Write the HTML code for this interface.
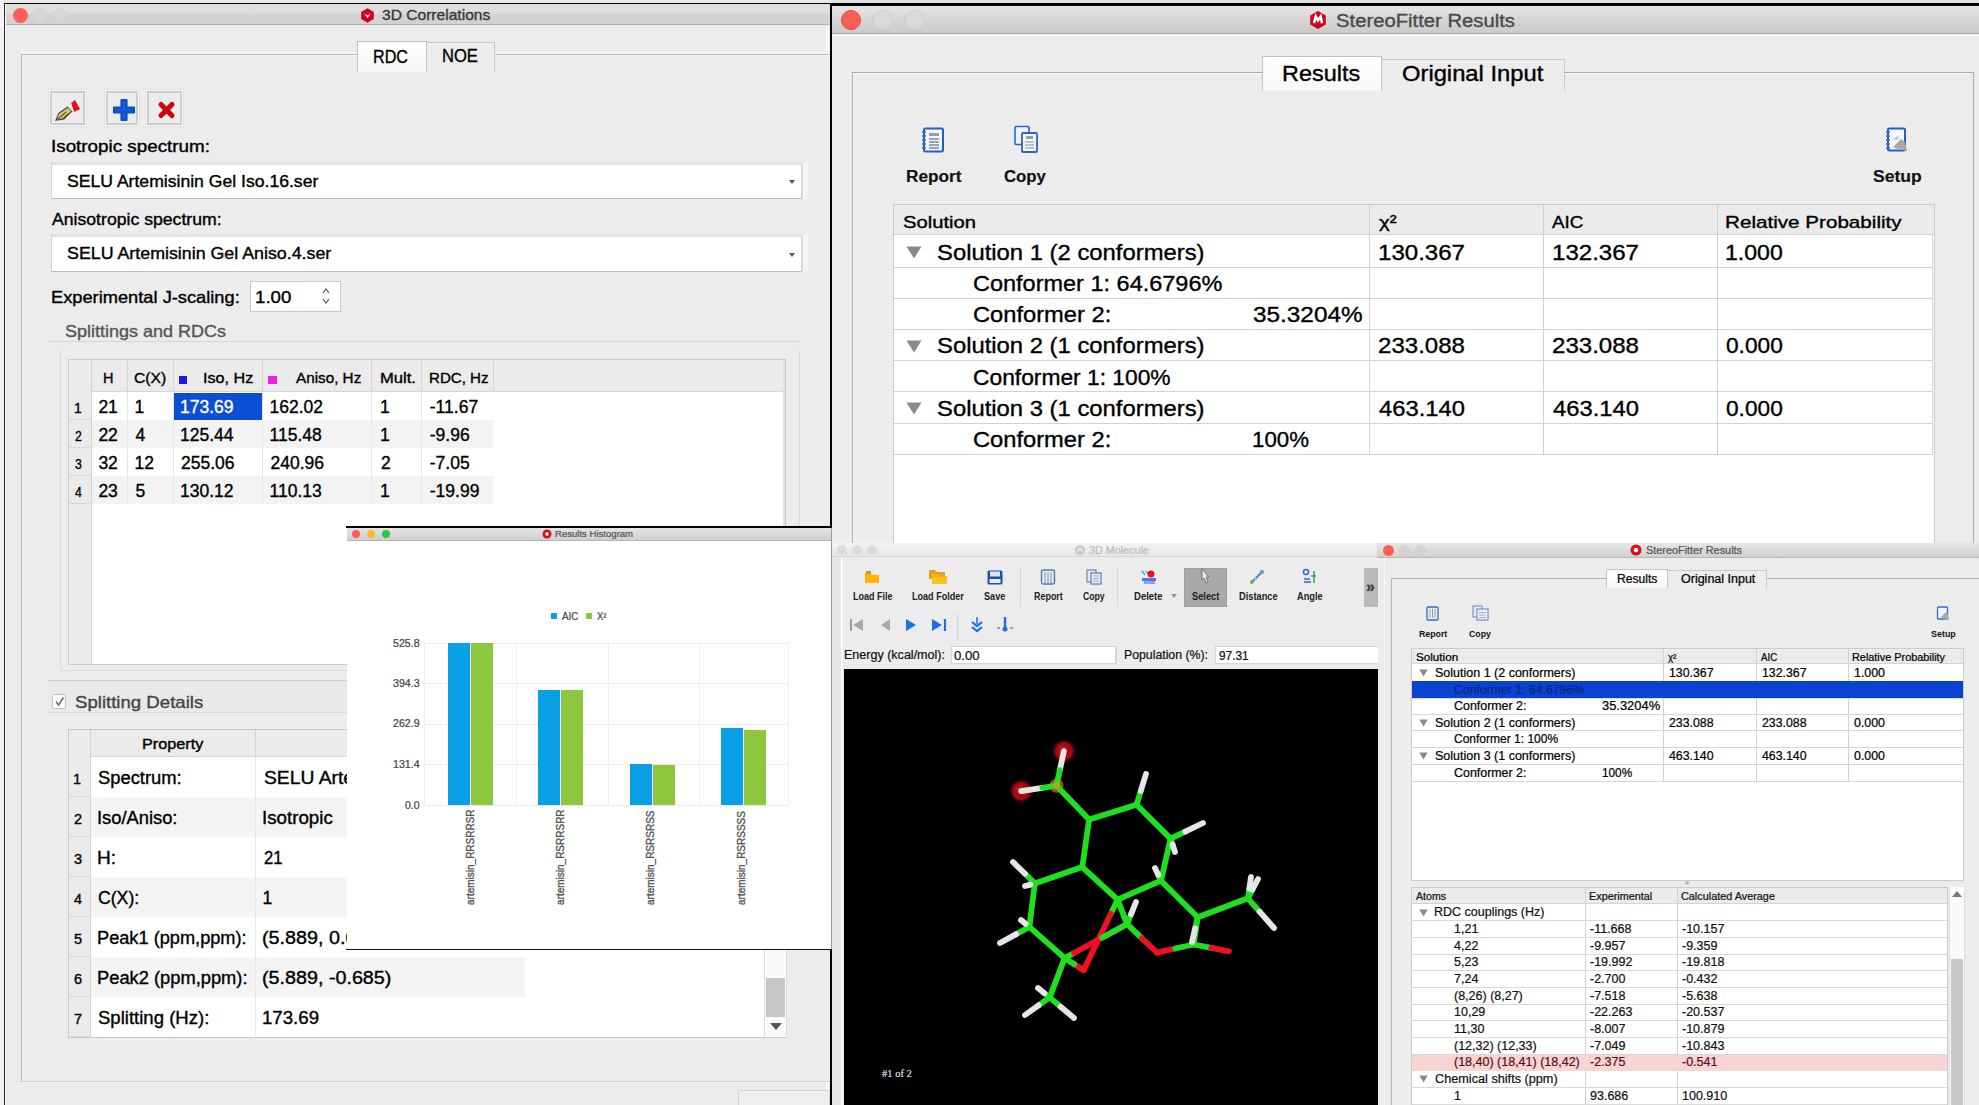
<!DOCTYPE html>
<html><head><meta charset="utf-8"><title>StereoFitter</title>
<style>
html,body{margin:0;padding:0;}
body{width:1979px;height:1105px;position:relative;overflow:hidden;background:#ececec;font-family:'Liberation Sans',sans-serif;}
div,span,svg{position:absolute;box-sizing:border-box;}
.t{white-space:pre;line-height:normal;transform-origin:0 0;font-family:'Liberation Sans',sans-serif;-webkit-text-stroke:0.35px currentColor;}

</style></head><body>
<div style="left:0px;top:0px;width:832px;height:3px;background:#e9e9e9;"></div>
<div style="left:0px;top:0px;width:4px;height:1105px;background:#f2f2f2;"></div>
<div style="left:4px;top:3px;width:828px;height:1102px;background:#ececec;"></div>
<div style="left:4px;top:3px;width:827px;height:1px;background:#000;"></div>
<div style="left:4px;top:3px;width:1px;height:1102px;background:#2a2a2a;"></div>
<div style="left:5px;top:4px;width:1px;height:1101px;background:#fafafa;"></div>
<div style="left:830px;top:3px;width:2px;height:1102px;background:#000;"></div>
<div style="left:826px;top:25px;width:3px;height:1080px;background:#f7f7f7;"></div>
<div style="left:6px;top:4px;width:824px;height:21px;background:linear-gradient(#e0e0e0 0%,#dcdcdc 50%,#d2d2d2 51%,#d2d2d2 100%);border-bottom:1px solid #b2b2b2;"></div>
<div style="left:12.5px;top:7.5px;width:15px;height:15px;background:#fc5f57;border-radius:50%;"></div>
<div style="left:33px;top:8px;width:14px;height:14px;background:#d6d6d6;border-radius:50%;"></div>
<div style="left:53px;top:8px;width:14px;height:14px;background:#d6d6d6;border-radius:50%;"></div>
<svg style="left:360px;top:8px" width="15" height="15" viewBox="0 0 15 15"><polygon points="7.5,0.3 13.8,3.9 13.8,11.1 7.5,14.7 1.2,11.1 1.2,3.9" fill="#d0021b"/><path d="M4.2,5.2 L7.5,10.2 L10.8,5.2 L7.5,7.5 Z" fill="#fff"/></svg>
<span class="t" style="left:382.00px;top:7.38px;font-size:14.5px;color:#3a3a3a;transform:scaleX(1.0748);">3D Correlations</span>
<div style="left:21px;top:52px;width:809px;height:2px;background:#f7f7f7;"></div>
<div style="left:21px;top:54px;width:809px;height:1028px;border:1px solid #b3b3b3;border-right:none;background:#ececec;box-shadow:inset 1px 1px 0 #f8f8f8;"></div>
<div style="left:357px;top:41px;width:70px;height:31px;background:linear-gradient(#ffffff,#f6f6f6);border:1px solid #c2c2c2;border-bottom:none;"></div>
<div style="left:427px;top:42px;width:68px;height:30px;background:#ececec;border:1px solid #c8c8c8;border-bottom:none;border-left:none;"></div>
<span class="t" style="left:373.11px;top:46.71px;font-size:18px;color:#000;transform:scaleX(0.8948);">RDC</span>
<span class="t" style="left:442.08px;top:46.21px;font-size:18px;color:#000;transform:scaleX(0.9211);">NOE</span>
<div style="left:48px;top:89px;width:39px;height:38px;background:#ececec;border:1px solid #e2e2e2;box-shadow:inset 0 0 0 1px #f6f6f6, inset 0 0 0 3px #cdcdcd;"></div>
<div style="left:104px;top:89px;width:36px;height:38px;background:#ececec;border:1px solid #e2e2e2;box-shadow:inset 0 0 0 1px #f6f6f6, inset 0 0 0 3px #cdcdcd;"></div>
<div style="left:145px;top:89px;width:39px;height:38px;background:#ececec;border:1px solid #e2e2e2;box-shadow:inset 0 0 0 1px #f6f6f6, inset 0 0 0 3px #cdcdcd;"></div>
<svg style="left:55px;top:99px" width="26" height="22" viewBox="0 0 26 22"><path d="M1,21 L4,14 L13,8 L17,12 L9,20 Z" fill="#d8c77a" stroke="#3e3e28" stroke-width="1.1"/><path d="M3,20 L11,13 M6,21 L13,15" stroke="#6a6030" stroke-width="1.3"/><path d="M16,4 L20,1 L25,10 L19,13 Z" fill="#e8101a"/><path d="M13,8 L16,4 L19,13 L17,12 Z" fill="#f2f2f2"/></svg>
<svg style="left:113px;top:99px" width="22" height="22" viewBox="0 0 22 22"><path d="M11,2 V20 M2,11 H20" stroke="#0b50cf" stroke-width="7.2" stroke-linecap="round"/><path d="M11,4 V18 M4,11 H18" stroke="#1a6ae6" stroke-width="2.5" stroke-linecap="round" opacity="0.6"/></svg>
<svg style="left:156px;top:100px" width="21" height="20" viewBox="0 0 21 20"><path d="M5,4.5 L16,15.5 M16,4.5 L5,15.5" stroke="#d0000c" stroke-width="5" stroke-linecap="round"/></svg>
<span class="t" style="left:50.82px;top:138.22px;font-size:16px;color:#000;transform:scaleX(1.1755);">Isotropic spectrum:</span>
<div style="left:51px;top:162px;width:751px;height:37px;background:#fff;border:1px solid #d4d4d4;border-top:3px solid #e3e3e3;border-bottom-color:#bdbdbd;"></div>
<div style="left:802px;top:162px;width:6px;height:37px;background:#f4f4f4;border-left:1px solid #dedede;"></div>
<span class="t" style="left:66.50px;top:172.52px;font-size:16px;color:#000;transform:scaleX(1.0996);">SELU Artemisinin Gel Iso.16.ser</span>
<svg style="left:788px;top:179px" width="8" height="6" viewBox="0 0 8 6"><path d="M1,1 L7,1 L4,5 Z" fill="#555"/></svg>
<span class="t" style="left:52.00px;top:211.02px;font-size:16px;color:#000;transform:scaleX(1.1024);">Anisotropic spectrum:</span>
<div style="left:51px;top:234px;width:751px;height:38px;background:#fff;border:1px solid #d4d4d4;border-top:3px solid #e3e3e3;border-bottom-color:#bdbdbd;"></div>
<div style="left:802px;top:234px;width:6px;height:38px;background:#f4f4f4;border-left:1px solid #dedede;"></div>
<span class="t" style="left:66.50px;top:245.02px;font-size:16px;color:#000;transform:scaleX(1.1131);">SELU Artemisinin Gel Aniso.4.ser</span>
<svg style="left:788px;top:252px" width="8" height="6" viewBox="0 0 8 6"><path d="M1,1 L7,1 L4,5 Z" fill="#555"/></svg>
<span class="t" style="left:50.89px;top:288.07px;font-size:16.5px;color:#000;transform:scaleX(1.1066);">Experimental J-scaling:</span>
<div style="left:250px;top:281px;width:91px;height:31px;background:#fff;border:1px solid #c9c9c9;"></div>
<span class="t" style="left:254.87px;top:288.07px;font-size:16.5px;color:#000;transform:scaleX(1.1313);">1.00</span>
<svg style="left:321px;top:286px" width="10" height="20" viewBox="0 0 10 20"><path d="M2,7 L5,3 L8,7" fill="none" stroke="#555" stroke-width="1.2"/><path d="M2,13 L5,17 L8,13" fill="none" stroke="#555" stroke-width="1.2"/></svg>
<span class="t" style="left:65.00px;top:322.52px;font-size:16px;color:#555;transform:scaleX(1.1245);">Splittings and RDCs</span>
<div style="left:48px;top:341px;width:752px;height:1px;background:#d4d4d4;"></div>
<div style="left:60px;top:351px;width:740px;height:320px;border:1px solid #dadada;border-top:none;"></div>
<div style="left:68px;top:359px;width:718px;height:306px;background:#fff;border:1px solid #c9c9c9;"></div>
<div style="left:69px;top:360px;width:716px;height:32px;background:#ebebeb;border-bottom:1px solid #d6d6d6;"></div>
<div style="left:69px;top:360px;width:23px;height:304px;background:#ebebeb;border-right:1px solid #d3d3d3;"></div>
<div style="left:783px;top:360px;width:2px;height:304px;background:#e2e2e2;"></div>
<div style="left:127px;top:360px;width:1px;height:32px;background:#d4d4d4;"></div>
<div style="left:173px;top:360px;width:1px;height:32px;background:#d4d4d4;"></div>
<div style="left:262px;top:360px;width:1px;height:32px;background:#d4d4d4;"></div>
<div style="left:371px;top:360px;width:1px;height:32px;background:#d4d4d4;"></div>
<div style="left:421px;top:360px;width:1px;height:32px;background:#d4d4d4;"></div>
<div style="left:493px;top:360px;width:1px;height:32px;background:#d4d4d4;"></div>
<div style="left:92px;top:392px;width:401px;height:28px;background:#ffffff;"></div>
<div style="left:127px;top:392px;width:1px;height:28px;background:#e6e6e6;"></div>
<div style="left:173px;top:392px;width:1px;height:28px;background:#e6e6e6;"></div>
<div style="left:262px;top:392px;width:1px;height:28px;background:#e6e6e6;"></div>
<div style="left:371px;top:392px;width:1px;height:28px;background:#e6e6e6;"></div>
<div style="left:421px;top:392px;width:1px;height:28px;background:#e6e6e6;"></div>
<div style="left:69px;top:419px;width:23px;height:1px;background:#d9d9d9;"></div>
<span class="t" style="left:74.00px;top:400.33px;font-size:14px;color:#000;">1</span>
<div style="left:92px;top:420px;width:401px;height:28px;background:#f3f3f3;"></div>
<div style="left:127px;top:420px;width:1px;height:28px;background:#e6e6e6;"></div>
<div style="left:173px;top:420px;width:1px;height:28px;background:#e6e6e6;"></div>
<div style="left:262px;top:420px;width:1px;height:28px;background:#e6e6e6;"></div>
<div style="left:371px;top:420px;width:1px;height:28px;background:#e6e6e6;"></div>
<div style="left:421px;top:420px;width:1px;height:28px;background:#e6e6e6;"></div>
<div style="left:69px;top:447px;width:23px;height:1px;background:#d9d9d9;"></div>
<span class="t" style="left:75.00px;top:428.33px;font-size:14px;color:#000;transform:scaleX(0.8750);">2</span>
<div style="left:92px;top:448px;width:401px;height:28px;background:#ffffff;"></div>
<div style="left:127px;top:448px;width:1px;height:28px;background:#e6e6e6;"></div>
<div style="left:173px;top:448px;width:1px;height:28px;background:#e6e6e6;"></div>
<div style="left:262px;top:448px;width:1px;height:28px;background:#e6e6e6;"></div>
<div style="left:371px;top:448px;width:1px;height:28px;background:#e6e6e6;"></div>
<div style="left:421px;top:448px;width:1px;height:28px;background:#e6e6e6;"></div>
<div style="left:69px;top:475px;width:23px;height:1px;background:#d9d9d9;"></div>
<span class="t" style="left:75.00px;top:456.33px;font-size:14px;color:#000;transform:scaleX(0.8750);">3</span>
<div style="left:92px;top:476px;width:401px;height:28px;background:#f3f3f3;"></div>
<div style="left:127px;top:476px;width:1px;height:28px;background:#e6e6e6;"></div>
<div style="left:173px;top:476px;width:1px;height:28px;background:#e6e6e6;"></div>
<div style="left:262px;top:476px;width:1px;height:28px;background:#e6e6e6;"></div>
<div style="left:371px;top:476px;width:1px;height:28px;background:#e6e6e6;"></div>
<div style="left:421px;top:476px;width:1px;height:28px;background:#e6e6e6;"></div>
<div style="left:69px;top:503px;width:23px;height:1px;background:#d9d9d9;"></div>
<span class="t" style="left:75.00px;top:484.33px;font-size:14px;color:#000;transform:scaleX(0.8750);">4</span>
<div style="left:173.5px;top:392.5px;width:88.5px;height:27px;background:#0b4fd4;"></div>
<span class="t" style="left:98.40px;top:396.66px;font-size:17.5px;color:#000;">21</span>
<span class="t" style="left:134.60px;top:396.66px;font-size:17.5px;color:#000;">1</span>
<span class="t" style="left:180.00px;top:396.66px;font-size:17.5px;color:#fff;">173.69</span>
<span class="t" style="left:269.50px;top:396.66px;font-size:17.5px;color:#000;">162.02</span>
<span class="t" style="left:380.00px;top:396.66px;font-size:17.5px;color:#000;">1</span>
<span class="t" style="left:429.80px;top:396.66px;font-size:17.5px;color:#000;">-11.67</span>
<span class="t" style="left:98.40px;top:424.66px;font-size:17.5px;color:#000;">22</span>
<span class="t" style="left:135.60px;top:424.66px;font-size:17.5px;color:#000;">4</span>
<span class="t" style="left:180.00px;top:424.66px;font-size:17.5px;color:#000;">125.44</span>
<span class="t" style="left:269.50px;top:424.66px;font-size:17.5px;color:#000;">115.48</span>
<span class="t" style="left:380.00px;top:424.66px;font-size:17.5px;color:#000;">1</span>
<span class="t" style="left:429.80px;top:424.66px;font-size:17.5px;color:#000;">-9.96</span>
<span class="t" style="left:98.40px;top:452.66px;font-size:17.5px;color:#000;">32</span>
<span class="t" style="left:134.60px;top:452.66px;font-size:17.5px;color:#000;">12</span>
<span class="t" style="left:181.00px;top:452.66px;font-size:17.5px;color:#000;">255.06</span>
<span class="t" style="left:270.50px;top:452.66px;font-size:17.5px;color:#000;">240.96</span>
<span class="t" style="left:381.00px;top:452.66px;font-size:17.5px;color:#000;">2</span>
<span class="t" style="left:429.80px;top:452.66px;font-size:17.5px;color:#000;">-7.05</span>
<span class="t" style="left:98.40px;top:480.66px;font-size:17.5px;color:#000;">23</span>
<span class="t" style="left:135.60px;top:480.66px;font-size:17.5px;color:#000;">5</span>
<span class="t" style="left:180.00px;top:480.66px;font-size:17.5px;color:#000;">130.12</span>
<span class="t" style="left:269.50px;top:480.66px;font-size:17.5px;color:#000;">110.13</span>
<span class="t" style="left:380.00px;top:480.66px;font-size:17.5px;color:#000;">1</span>
<span class="t" style="left:429.80px;top:480.66px;font-size:17.5px;color:#000;">-19.99</span>
<span class="t" style="left:103.00px;top:369.88px;font-size:14.5px;color:#000;">H</span>
<span class="t" style="left:134.40px;top:369.88px;font-size:14.5px;color:#000;transform:scaleX(1.0838);">C(X)</span>
<div style="left:178.6px;top:376px;width:8.4px;height:7.5px;background:#1a1ae6;"></div>
<span class="t" style="left:202.88px;top:369.88px;font-size:14.5px;color:#000;transform:scaleX(1.1169);">Iso, Hz</span>
<div style="left:268px;top:376px;width:8.5px;height:7.5px;background:#f020e8;"></div>
<span class="t" style="left:296.00px;top:369.88px;font-size:14.5px;color:#000;transform:scaleX(1.0518);">Aniso, Hz</span>
<span class="t" style="left:379.86px;top:369.88px;font-size:14.5px;color:#000;transform:scaleX(1.1431);">Mult.</span>
<span class="t" style="left:428.76px;top:369.88px;font-size:14.5px;color:#000;transform:scaleX(1.0403);">RDC, Hz</span>
<div style="left:48px;top:680px;width:752px;height:1px;background:#d0d0d0;"></div>
<div style="left:48px;top:681px;width:752px;height:32px;background:#e9e9e9;"></div>
<div style="left:48px;top:712px;width:752px;height:1px;background:#d8d8d8;"></div>
<div style="left:52px;top:694px;width:14px;height:15px;background:#fbfbfb;border:1px solid #c4c4c4;border-radius:2px;"></div>
<svg style="left:54px;top:696px" width="11" height="11" viewBox="0 0 11 11"><path d="M2,5.5 L4.5,9 L9.5,1.5" fill="none" stroke="#666" stroke-width="1.4"/></svg>
<span class="t" style="left:75.30px;top:692.62px;font-size:17px;color:#444;transform:scaleX(1.0946);">Splitting Details</span>
<div style="left:68px;top:729px;width:719px;height:309px;background:#fff;border:1px solid #c9c9c9;"></div>
<div style="left:69px;top:730px;width:717px;height:27px;background:#ebebeb;border-bottom:1px solid #d6d6d6;"></div>
<div style="left:69px;top:730px;width:22px;height:307px;background:#ebebeb;border-right:1px solid #d3d3d3;"></div>
<div style="left:255px;top:730px;width:1px;height:27px;background:#d4d4d4;"></div>
<div style="left:524px;top:730px;width:1px;height:27px;background:#d4d4d4;"></div>
<span class="t" style="left:141.88px;top:736.38px;font-size:14.5px;color:#000;transform:scaleX(1.1182);">Property</span>
<div style="left:91px;top:757px;width:434px;height:40px;background:#ffffff;"></div>
<div style="left:255px;top:757px;width:1px;height:40px;background:#e8e8e8;"></div>
<div style="left:69px;top:796px;width:22px;height:1px;background:#dadada;"></div>
<span class="t" style="left:73.00px;top:770.88px;font-size:14.5px;color:#000;">1</span>
<span class="t" style="left:97.60px;top:767.66px;font-size:17.5px;color:#000;transform:scaleX(1.0496);">Spectrum:</span>
<span class="t" style="left:263.50px;top:767.66px;font-size:17.5px;color:#000;transform:scaleX(1.1020);">SELU Artemisinin Gel Iso.16.ser</span>
<div style="left:91px;top:797px;width:434px;height:40px;background:#f4f4f4;"></div>
<div style="left:255px;top:797px;width:1px;height:40px;background:#e8e8e8;"></div>
<div style="left:69px;top:836px;width:22px;height:1px;background:#dadada;"></div>
<span class="t" style="left:74.00px;top:810.88px;font-size:14.5px;color:#000;">2</span>
<span class="t" style="left:96.55px;top:807.66px;font-size:17.5px;color:#000;transform:scaleX(1.0469);">Iso/Aniso:</span>
<span class="t" style="left:262.43px;top:807.66px;font-size:17.5px;color:#000;transform:scaleX(1.0705);">Isotropic</span>
<div style="left:91px;top:837px;width:434px;height:40px;background:#ffffff;"></div>
<div style="left:255px;top:837px;width:1px;height:40px;background:#e8e8e8;"></div>
<div style="left:69px;top:876px;width:22px;height:1px;background:#dadada;"></div>
<span class="t" style="left:74.00px;top:850.88px;font-size:14.5px;color:#000;">3</span>
<span class="t" style="left:96.51px;top:847.66px;font-size:17.5px;color:#000;transform:scaleX(1.0871);">H:</span>
<span class="t" style="left:263.50px;top:847.66px;font-size:17.5px;color:#000;transform:scaleX(0.9502);">21</span>
<div style="left:91px;top:877px;width:434px;height:40px;background:#f4f4f4;"></div>
<div style="left:255px;top:877px;width:1px;height:40px;background:#e8e8e8;"></div>
<div style="left:69px;top:916px;width:22px;height:1px;background:#dadada;"></div>
<span class="t" style="left:74.00px;top:890.88px;font-size:14.5px;color:#000;">4</span>
<span class="t" style="left:97.60px;top:887.66px;font-size:17.5px;color:#000;transform:scaleX(1.0084);">C(X):</span>
<span class="t" style="left:262.50px;top:887.66px;font-size:17.5px;color:#000;">1</span>
<div style="left:91px;top:917px;width:434px;height:40px;background:#ffffff;"></div>
<div style="left:255px;top:917px;width:1px;height:40px;background:#e8e8e8;"></div>
<div style="left:69px;top:956px;width:22px;height:1px;background:#dadada;"></div>
<span class="t" style="left:74.00px;top:930.88px;font-size:14.5px;color:#000;">5</span>
<span class="t" style="left:96.56px;top:927.66px;font-size:17.5px;color:#000;transform:scaleX(1.0395);">Peak1 (ppm,ppm):</span>
<span class="t" style="left:262.37px;top:927.66px;font-size:17.5px;color:#000;transform:scaleX(1.1294);">(5.889, 0.000)</span>
<div style="left:91px;top:957px;width:434px;height:40px;background:#f4f4f4;"></div>
<div style="left:255px;top:957px;width:1px;height:40px;background:#e8e8e8;"></div>
<div style="left:69px;top:996px;width:22px;height:1px;background:#dadada;"></div>
<span class="t" style="left:74.00px;top:970.88px;font-size:14.5px;color:#000;">6</span>
<span class="t" style="left:96.55px;top:967.66px;font-size:17.5px;color:#000;transform:scaleX(1.0458);">Peak2 (ppm,ppm):</span>
<span class="t" style="left:262.37px;top:967.66px;font-size:17.5px;color:#000;transform:scaleX(1.1269);">(5.889, -0.685)</span>
<div style="left:91px;top:997px;width:434px;height:40px;background:#ffffff;"></div>
<div style="left:255px;top:997px;width:1px;height:40px;background:#e8e8e8;"></div>
<div style="left:69px;top:1036px;width:22px;height:1px;background:#dadada;"></div>
<span class="t" style="left:74.00px;top:1010.88px;font-size:14.5px;color:#000;">7</span>
<span class="t" style="left:97.60px;top:1007.66px;font-size:17.5px;color:#000;transform:scaleX(1.0599);">Splitting (Hz):</span>
<span class="t" style="left:262.43px;top:1007.66px;font-size:17.5px;color:#000;transform:scaleX(1.0658);">173.69</span>
<div style="left:764px;top:950px;width:23px;height:87px;background:#fafafa;border-left:1px solid #dcdcdc;border-right:1px solid #dcdcdc;"></div>
<div style="left:766px;top:978px;width:19px;height:39px;background:#c6c6c6;"></div>
<svg style="left:769px;top:1021px" width="14" height="10" viewBox="0 0 14 10"><path d="M1,2 L13,2 L7,9 Z" fill="#555"/></svg>
<div style="left:20px;top:1081px;width:810px;height:1px;background:#cfcfcf;"></div>
<div style="left:738px;top:1090px;width:92px;height:15px;background:#f0f0f0;border:1px solid #d4d4d4;border-bottom:none;"></div>
<div style="left:832px;top:0px;width:1147px;height:3px;background:#e0e0e0;"></div>
<div style="left:832px;top:3px;width:1147px;height:543px;background:#ececec;"></div>
<div style="left:830px;top:3px;width:1149px;height:3.3px;background:#000;"></div>
<div style="left:832px;top:6.3px;width:1147px;height:27.7px;background:linear-gradient(#e4e4e4 0%,#dcdcdc 30%,#d3d3d3 60%,#cbcbcb 100%);border-bottom:1px solid #a8a8a8;"></div>
<div style="left:832px;top:35px;width:1147px;height:1px;background:#f8f8f8;"></div>
<div style="left:841px;top:10px;width:20px;height:20px;background:#fd5f57;border-radius:50%;border:1px solid #e2463f;"></div>
<div style="left:873px;top:10px;width:20px;height:20px;background:#d9d9d9;border-radius:50%;border:1px solid #cfcfcf;"></div>
<div style="left:905px;top:10px;width:20px;height:20px;background:#d9d9d9;border-radius:50%;border:1px solid #cfcfcf;"></div>
<svg style="left:1309px;top:11px" width="18" height="18" viewBox="0 0 18 18"><polygon points="9.00,0.00 16.79,4.50 16.79,13.50 9.00,18.00 1.21,13.50 1.21,4.50" fill="#d0021b"/><path d="M4.95,12.15 L6.75,5.3999999999999995 L9,9.450000000000001 L11.700000000000001,5.3999999999999995 L13.049999999999999,12.15" fill="none" stroke="#fff" stroke-width="2.5200000000000005"/></svg>
<span class="t" style="left:1336.40px;top:11.01px;font-size:18px;color:#4a4a4a;transform:scaleX(1.1254);">StereoFitter Results</span>
<div style="left:852px;top:72px;width:1122px;height:476px;border:1px solid #ababab;background:#ececec;box-shadow:inset 1px 1px 0 #f8f8f8;"></div>
<div style="left:1262px;top:56px;width:120px;height:35px;background:linear-gradient(#fff,#f7f7f7);border:1px solid #c3c3c3;border-bottom:none;"></div>
<div style="left:1382px;top:59px;width:183px;height:32px;background:#ececec;border:1px solid #c8c8c8;border-left:none;border-bottom:none;"></div>
<span class="t" style="left:1281.61px;top:62.34px;font-size:21.5px;color:#000;transform:scaleX(1.0909);">Results</span>
<span class="t" style="left:1401.70px;top:62.34px;font-size:21.5px;color:#000;transform:scaleX(1.1048);">Original Input</span>
<svg style="left:920px;top:127px" width="25.0" height="26.0" viewBox="0 0 25 26"><rect x="4" y="1.5" width="19" height="23" rx="1.5" fill="#f4f7fb" stroke="#1f5fc8" stroke-width="2"/><path d="M2,5 h4 M2,9 h4 M2,13 h4 M2,17 h4 M2,21 h4" stroke="#3a6fd0" stroke-width="1.4"/><rect x="9" y="6" width="10" height="3" fill="#8aa2c8"/><path d="M9,12 h10 M9,15 h10 M9,18 h10 M9,21 h10" stroke="#7a8aa6" stroke-width="1.3"/></svg>
<span class="t" style="left:906.43px;top:167.92px;font-size:16px;color:#111;font-weight:700;-webkit-text-stroke-width:0.15px;transform:scaleX(1.0737);">Report</span>
<svg style="left:1012px;top:125px" width="28.0" height="28.0" viewBox="0 0 28 28"><rect x="3" y="1.5" width="14" height="18" rx="1" fill="#eef2f8" stroke="#2d64c4" stroke-width="1.6"/><rect x="10" y="8" width="15" height="19" rx="1" fill="#f6f8fb" stroke="#2d64c4" stroke-width="1.8"/><rect x="14" y="11" width="7" height="3" fill="#8da0c0"/><path d="M13,17 h9 M13,20 h9 M13,23 h9" stroke="#7d8aa4" stroke-width="1.2"/></svg>
<span class="t" style="left:1004.00px;top:167.92px;font-size:16px;color:#111;font-weight:700;-webkit-text-stroke-width:0.15px;transform:scaleX(1.0473);">Copy</span>
<svg style="left:1884px;top:127px" width="25.0" height="26.0" viewBox="0 0 25 26"><rect x="4" y="1.5" width="17" height="22" rx="1.5" fill="#f4f6fa" stroke="#1f5fc8" stroke-width="2"/><path d="M2,5 h4 M2,9 h4 M2,13 h4 M2,17 h4 M2,21 h4" stroke="#3a6fd0" stroke-width="1.3"/><path d="M9,20 L17,12 L21,15 L23,24 L14,22 Z" fill="#a8a8a8"/><path d="M9,13 L13,9 L15,12 Z" fill="#bdbdbd"/></svg>
<span class="t" style="left:1872.70px;top:167.52px;font-size:16px;color:#111;font-weight:700;-webkit-text-stroke-width:0.15px;transform:scaleX(1.0969);">Setup</span>
<div style="left:893px;top:204px;width:1042px;height:340px;background:#fff;border:1px solid #c9c9c9;border-bottom:none;"></div>
<div style="left:894px;top:205px;width:1040px;height:30px;background:#ebebeb;border-bottom:1px solid #d2d2d2;"></div>
<div style="left:1369px;top:205px;width:1px;height:250px;background:#d0d0d0;"></div>
<div style="left:1543px;top:205px;width:1px;height:250px;background:#d0d0d0;"></div>
<div style="left:1717px;top:205px;width:1px;height:250px;background:#d0d0d0;"></div>
<div style="left:1932px;top:235px;width:1px;height:220px;background:#d6d6d6;"></div>
<span class="t" style="left:902.50px;top:213.12px;font-size:17px;color:#000;transform:scaleX(1.1889);">Solution</span>
<span class="t" style="left:1379.00px;top:213.12px;font-size:17px;color:#000;transform:scaleX(1.2062);">χ²</span>
<span class="t" style="left:1551.50px;top:213.12px;font-size:17px;color:#000;transform:scaleX(1.1047);">AIC</span>
<span class="t" style="left:1724.59px;top:213.12px;font-size:17px;color:#000;transform:scaleX(1.2137);">Relative Probability</span>
<div style="left:894px;top:267px;width:1039px;height:1px;background:#d3d3d3;"></div>
<div style="left:894px;top:298px;width:1039px;height:1px;background:#d3d3d3;"></div>
<div style="left:894px;top:329px;width:1039px;height:1px;background:#d3d3d3;"></div>
<div style="left:894px;top:360px;width:1039px;height:1px;background:#d3d3d3;"></div>
<div style="left:894px;top:391px;width:1039px;height:1px;background:#d3d3d3;"></div>
<div style="left:894px;top:423px;width:1039px;height:1px;background:#d3d3d3;"></div>
<div style="left:894px;top:454px;width:1039px;height:1px;background:#d3d3d3;"></div>
<svg style="left:906px;top:246.0px" width="16" height="13" viewBox="0 0 16 13"><path d="M0.5,0.5 L15.5,0.5 L8,12.5 Z" fill="#8a8a8a"/></svg>
<span class="t" style="left:937.42px;top:239.79px;font-size:22px;color:#000;transform:scaleX(1.0831);">Solution 1 (2 conformers)</span>
<span class="t" style="left:1377.61px;top:239.79px;font-size:22px;color:#000;transform:scaleX(1.0934);">130.367</span>
<span class="t" style="left:1551.91px;top:239.79px;font-size:22px;color:#000;transform:scaleX(1.0934);">132.367</span>
<span class="t" style="left:1724.75px;top:239.79px;font-size:22px;color:#000;transform:scaleX(1.0498);">1.000</span>
<span class="t" style="left:972.93px;top:270.99px;font-size:22px;color:#000;transform:scaleX(1.0676);">Conformer 1: 64.6796%</span>
<span class="t" style="left:972.92px;top:302.19px;font-size:22px;color:#000;transform:scaleX(1.0771);">Conformer 2:</span>
<svg style="left:906px;top:339.6px" width="16" height="13" viewBox="0 0 16 13"><path d="M0.5,0.5 L15.5,0.5 L8,12.5 Z" fill="#8a8a8a"/></svg>
<span class="t" style="left:937.42px;top:333.39px;font-size:22px;color:#000;transform:scaleX(1.0831);">Solution 2 (1 conformers)</span>
<span class="t" style="left:1377.61px;top:333.39px;font-size:22px;color:#000;transform:scaleX(1.0934);">233.088</span>
<span class="t" style="left:1551.91px;top:333.39px;font-size:22px;color:#000;transform:scaleX(1.0934);">233.088</span>
<span class="t" style="left:1725.80px;top:333.39px;font-size:22px;color:#000;transform:scaleX(1.0307);">0.000</span>
<span class="t" style="left:972.96px;top:364.59px;font-size:22px;color:#000;transform:scaleX(1.0360);">Conformer 1: 100%</span>
<svg style="left:906px;top:402.0px" width="16" height="13" viewBox="0 0 16 13"><path d="M0.5,0.5 L15.5,0.5 L8,12.5 Z" fill="#8a8a8a"/></svg>
<span class="t" style="left:937.42px;top:395.79px;font-size:22px;color:#000;transform:scaleX(1.0831);">Solution 3 (1 conformers)</span>
<span class="t" style="left:1378.70px;top:395.79px;font-size:22px;color:#000;transform:scaleX(1.0796);">463.140</span>
<span class="t" style="left:1553.00px;top:395.79px;font-size:22px;color:#000;transform:scaleX(1.0796);">463.140</span>
<span class="t" style="left:1725.80px;top:395.79px;font-size:22px;color:#000;transform:scaleX(1.0307);">0.000</span>
<span class="t" style="left:972.92px;top:426.99px;font-size:22px;color:#000;transform:scaleX(1.0771);">Conformer 2:</span>
<span class="t" style="left:1252.60px;top:302.19px;font-size:22px;color:#000;transform:scaleX(1.1063);">35.3204%</span>
<span class="t" style="left:1251.59px;top:426.99px;font-size:22px;color:#000;transform:scaleX(1.0127);">100%</span>
<div style="left:832px;top:543px;width:546px;height:562px;background:#ececec;"></div>
<div style="left:830px;top:543px;width:1.8px;height:562px;background:#000;"></div>
<div style="left:832px;top:557px;width:12px;height:548px;background:#e6e6e6;"></div>
<div style="left:840.5px;top:557px;width:2.5px;height:548px;background:#fafafa;"></div>
<div style="left:832px;top:543px;width:546px;height:14px;background:linear-gradient(#f3f3f3,#e6e6e6);border-bottom:1px solid #d5d5d5;"></div>
<div style="left:837px;top:545px;width:10px;height:10px;background:#dcdcdc;border-radius:50%;"></div>
<div style="left:852px;top:545px;width:10px;height:10px;background:#dcdcdc;border-radius:50%;"></div>
<div style="left:867px;top:545px;width:10px;height:10px;background:#dcdcdc;border-radius:50%;"></div>
<svg style="left:1074px;top:544px" width="12" height="12" viewBox="0 0 12 12"><circle cx="6" cy="6" r="5" fill="#c9c9c9"/><path d="M3.5,7.5 L6,4 L8.5,7.5" stroke="#eee" stroke-width="1.4" fill="none"/></svg>
<span class="t" style="left:1089.00px;top:543.50px;font-size:10.5px;color:#bdbdbd;-webkit-text-stroke-width:0.22px;transform:scaleX(1.0253);">3D Molecule</span>
<svg style="left:864px;top:569px" width="16" height="15" viewBox="0 0 16 15"><path d="M1,4 h5 l2,2 h7 v8 h-14 z" fill="#f6a800"/><path d="M1,6 h14 v8 h-14 z" fill="#ffb400"/><rect x="2" y="2" width="5" height="3" fill="#c8a03a"/></svg>
<span class="t" style="left:852.50px;top:590.55px;font-size:10px;color:#222;font-weight:700;-webkit-text-stroke-width:0.0px;transform:scaleX(0.9023);">Load File</span>
<svg style="left:928px;top:568px" width="20" height="17" viewBox="0 0 20 17"><path d="M1,2 h6 l2,2 h8 v7 h-16 z" fill="#e0a020"/><path d="M4,6 h6 l2,2 h7 v8 h-15 z" fill="#ffb000"/><path d="M4,9 h15 v7 h-15 z" fill="#ffc21a"/></svg>
<span class="t" style="left:912.00px;top:590.55px;font-size:10px;color:#222;font-weight:700;-webkit-text-stroke-width:0.0px;transform:scaleX(0.9070);">Load Folder</span>
<svg style="left:987px;top:570px" width="16" height="15" viewBox="0 0 16 15"><rect x="0.5" y="0.5" width="15" height="14" rx="1.5" fill="#1f4fb0"/><rect x="3" y="1.5" width="10" height="5" fill="#dde6f5"/><rect x="2.5" y="9" width="11" height="4" fill="#e8eef8"/></svg>
<span class="t" style="left:983.65px;top:590.55px;font-size:10px;color:#222;font-weight:700;-webkit-text-stroke-width:0.0px;transform:scaleX(0.9120);">Save</span>
<div style="left:1020px;top:568px;width:1px;height:39px;background:#d6d6d6;"></div>
<svg style="left:1040px;top:569px" width="16" height="16" viewBox="0 0 16 16"><rect x="1.5" y="1" width="13" height="14" rx="2" fill="#e9eef6" stroke="#5777a8" stroke-width="1.4"/><path d="M5,3 v11 M8,3 v11 M11,3 v11" stroke="#8aa0c6" stroke-width="1.2"/></svg>
<span class="t" style="left:1033.60px;top:590.55px;font-size:10px;color:#222;font-weight:700;-webkit-text-stroke-width:0.0px;transform:scaleX(0.8938);">Report</span>
<svg style="left:1086px;top:569px" width="16" height="16" viewBox="0 0 16 16"><rect x="1" y="1" width="9" height="12" fill="#e4ebf5" stroke="#5a7ab0" stroke-width="1.1"/><rect x="5" y="4" width="10" height="11" fill="#eef2f8" stroke="#5a7ab0" stroke-width="1.2"/><path d="M7,7 h6 M7,9.5 h6 M7,12 h6" stroke="#8aa0c6" stroke-width="1"/></svg>
<span class="t" style="left:1083.00px;top:590.55px;font-size:10px;color:#222;font-weight:700;-webkit-text-stroke-width:0.0px;transform:scaleX(0.8648);">Copy</span>
<div style="left:1117px;top:568px;width:1px;height:39px;background:#d6d6d6;"></div>
<svg style="left:1141px;top:569px" width="17" height="16" viewBox="0 0 17 16"><path d="M1,2 l3,4 M5,2 l3,4" stroke="#2fa5e0" stroke-width="1.3"/><circle cx="10" cy="5" r="3.5" fill="#e8101a"/><rect x="1" y="9" width="14" height="3" fill="#5b6fe6"/><rect x="3" y="12" width="11" height="3" fill="#8fa0f0"/></svg>
<span class="t" style="left:1134.00px;top:590.55px;font-size:10px;color:#222;font-weight:700;-webkit-text-stroke-width:0.0px;transform:scaleX(0.9523);">Delete</span>
<svg style="left:1171px;top:594px" width="6" height="5" viewBox="0 0 6 5"><path d="M0,0 h6 l-3,4z" fill="#999"/></svg>
<div style="left:1184px;top:568px;width:43px;height:39px;background:#a9a9a9;border:1px solid #9e9e9e;"></div>
<svg style="left:1198px;top:568px" width="14" height="18" viewBox="0 0 14 18"><path d="M4,1 v11 l2,-2 l2,5 l2,-1 l-2,-5 h3 z" fill="#e8e8e8" stroke="#6d6d6d" stroke-width="0.9"/></svg>
<span class="t" style="left:1191.60px;top:590.55px;font-size:10px;color:#222;font-weight:700;-webkit-text-stroke-width:0.0px;transform:scaleX(0.9292);">Select</span>
<svg style="left:1248px;top:568px" width="18" height="17" viewBox="0 0 18 17"><path d="M3,15 L15,3" stroke="#3a86d8" stroke-width="2"/><circle cx="4" cy="14" r="2" fill="#61c04a"/><circle cx="14" cy="4" r="2" fill="#7b8de0"/><path d="M6,9 l3,3" stroke="#c9c9f0" stroke-width="1.5"/></svg>
<span class="t" style="left:1238.50px;top:590.55px;font-size:10px;color:#222;font-weight:700;-webkit-text-stroke-width:0.0px;transform:scaleX(0.9259);">Distance</span>
<svg style="left:1302px;top:568px" width="17" height="17" viewBox="0 0 17 17"><circle cx="4" cy="4" r="2.5" fill="none" stroke="#3666d6" stroke-width="1.6"/><path d="M2,11 h6 M2,14 h7" stroke="#3666d6" stroke-width="1.6"/><path d="M12,3 v12" stroke="#58b846" stroke-width="1.8"/><path d="M9,8 h5" stroke="#3666d6" stroke-width="1.2"/></svg>
<span class="t" style="left:1297.00px;top:590.55px;font-size:10px;color:#222;font-weight:700;-webkit-text-stroke-width:0.0px;transform:scaleX(0.9214);">Angle</span>
<div style="left:1364px;top:568px;width:14px;height:39px;background:#b9b9b9;"></div>
<span class="t" style="left:1366.00px;top:577.52px;font-size:16px;color:#333;font-weight:700;-webkit-text-stroke-width:0.15px;">»</span>
<svg style="left:849px;top:617px" width="16" height="16" viewBox="0 0 16 16"><path d="M2,2 v12" stroke="#9a9a9a" stroke-width="2"/><path d="M14,2 L4,8 L14,14 Z" fill="#a9a9a9"/></svg>
<svg style="left:878px;top:617px" width="14" height="16" viewBox="0 0 14 16"><path d="M12,2 L3,8 L12,14 Z" fill="#a9a9a9"/></svg>
<svg style="left:904px;top:617px" width="14" height="16" viewBox="0 0 14 16"><path d="M2,2 L12,8 L2,14 Z" fill="#1a72e0"/></svg>
<svg style="left:931px;top:617px" width="18" height="16" viewBox="0 0 18 16"><path d="M1,2 L11,8 L1,14 Z" fill="#1a72e0"/><path d="M14,2 v12" stroke="#1a72e0" stroke-width="2.2"/></svg>
<div style="left:957px;top:614px;width:1px;height:27px;background:#d4d4d4;"></div>
<svg style="left:969px;top:616px" width="16" height="18" viewBox="0 0 16 18"><path d="M8,1 v7" stroke="#1a72e0" stroke-width="1.5"/><path d="M3,6 l5,4 l5,-4 M3,11 l5,4 l5,-4" stroke="#1a72e0" stroke-width="2.2" fill="none"/></svg>
<svg style="left:996px;top:616px" width="18" height="18" viewBox="0 0 18 18"><path d="M9,1 v13" stroke="#1a72e0" stroke-width="2.4"/><path d="M1,12 h3 M14,12 h3" stroke="#888" stroke-width="1.3"/><circle cx="9" cy="13" r="2.5" fill="#1a72e0"/></svg>
<span class="t" style="left:844.00px;top:648.14px;font-size:12px;color:#111;-webkit-text-stroke-width:0.22px;transform:scaleX(1.0440);">Energy (kcal/mol):</span>
<div style="left:951px;top:646px;width:165px;height:18px;background:#fff;border:1px solid #d6d6d6;"></div>
<span class="t" style="left:954.00px;top:648.64px;font-size:12px;color:#111;-webkit-text-stroke-width:0.22px;transform:scaleX(1.0979);">0.00</span>
<div style="left:1116px;top:646px;width:1px;height:18px;background:#d6d6d6;"></div>
<span class="t" style="left:1124.00px;top:648.14px;font-size:12px;color:#111;-webkit-text-stroke-width:0.22px;transform:scaleX(1.0231);">Population (%):</span>
<div style="left:1215px;top:646px;width:163px;height:18px;background:#fff;border:1px solid #d6d6d6;border-right:none;"></div>
<span class="t" style="left:1219.00px;top:648.64px;font-size:12px;color:#111;-webkit-text-stroke-width:0.22px;transform:scaleX(0.9883);">97.31</span>
<div style="left:844px;top:669px;width:534px;height:436px;background:#000;"></div>
<svg style="left:844px;top:669px" width="534" height="436" viewBox="844 669 534 436"><g stroke-linecap="round"><circle cx="1063.9" cy="751.2" r="11" fill="#7a0a0e" opacity="0.55"/><circle cx="1063.9" cy="751.2" r="9" fill="#9e0c12"/><circle cx="1062.4" cy="749.7" r="4.5" fill="#c4161e" opacity="0.7"/><circle cx="1021.2" cy="791.1" r="11" fill="#7a0a0e" opacity="0.55"/><circle cx="1021.2" cy="791.1" r="9" fill="#9e0c12"/><circle cx="1019.7" cy="789.6" r="4.5" fill="#c4161e" opacity="0.7"/><circle cx="1056.5" cy="785.7" r="7" fill="#8a5a10"/><line x1="1056.5" y1="785.7" x2="1089.1" y2="819.6" stroke="#1fe01f" stroke-width="5.8"/><line x1="1063.9" y1="751.2" x2="1059.8" y2="770.2" stroke="#e6e6e6" stroke-width="5.8"/><line x1="1059.8" y1="770.2" x2="1056.5" y2="785.7" stroke="#1fe01f" stroke-width="5.8"/><line x1="1021.2" y1="791.1" x2="1042.4" y2="787.9" stroke="#e6e6e6" stroke-width="5.8"/><line x1="1042.4" y1="787.9" x2="1056.5" y2="785.7" stroke="#1fe01f" stroke-width="5.8"/><line x1="1089.1" y1="819.6" x2="1136.6" y2="804.7" stroke="#1fe01f" stroke-width="5.8"/><line x1="1136.6" y1="804.7" x2="1170.6" y2="838.6" stroke="#1fe01f" stroke-width="5.8"/><line x1="1170.6" y1="838.6" x2="1161.0" y2="880.7" stroke="#1fe01f" stroke-width="5.8"/><line x1="1089.1" y1="819.6" x2="1082.3" y2="867.1" stroke="#1fe01f" stroke-width="5.8"/><line x1="1082.3" y1="867.1" x2="1117.6" y2="899.7" stroke="#1fe01f" stroke-width="5.8"/><line x1="1161.0" y1="880.7" x2="1117.6" y2="899.7" stroke="#1fe01f" stroke-width="5.8"/><line x1="1082.3" y1="867.1" x2="1034.8" y2="883.4" stroke="#1fe01f" stroke-width="5.8"/><line x1="1034.8" y1="883.4" x2="1029.4" y2="926.9" stroke="#1fe01f" stroke-width="5.8"/><line x1="1029.4" y1="926.9" x2="1064.7" y2="958.1" stroke="#1fe01f" stroke-width="5.8"/><line x1="1064.7" y1="958.1" x2="1049.7" y2="997.4" stroke="#1fe01f" stroke-width="5.8"/><line x1="1117.6" y1="899.7" x2="1127.1" y2="924.1" stroke="#1fe01f" stroke-width="5.8"/><line x1="1161.0" y1="880.7" x2="1197.7" y2="917.3" stroke="#1fe01f" stroke-width="5.8"/><line x1="1197.7" y1="917.3" x2="1247.9" y2="898.3" stroke="#1fe01f" stroke-width="5.8"/><line x1="1197.7" y1="917.3" x2="1193.6" y2="944.5" stroke="#1fe01f" stroke-width="5.8"/><line x1="1127.1" y1="924.1" x2="1142.0" y2="938.4" stroke="#1fe01f" stroke-width="5.8"/><line x1="1142.0" y1="938.4" x2="1157.0" y2="952.6" stroke="#ee1122" stroke-width="5.8"/><line x1="1157.0" y1="952.6" x2="1175.3" y2="948.5" stroke="#ee1122" stroke-width="5.8"/><line x1="1175.3" y1="948.5" x2="1193.6" y2="944.5" stroke="#1fe01f" stroke-width="5.8"/><line x1="1193.6" y1="944.5" x2="1211.2" y2="947.9" stroke="#1fe01f" stroke-width="5.8"/><line x1="1211.2" y1="947.9" x2="1228.9" y2="951.3" stroke="#ee1122" stroke-width="5.8"/><line x1="1117.6" y1="899.7" x2="1110.8" y2="913.8" stroke="#1fe01f" stroke-width="5.8"/><line x1="1110.8" y1="913.8" x2="1083.7" y2="970.3" stroke="#ee1122" stroke-width="5.8"/><line x1="1083.7" y1="970.3" x2="1074.2" y2="964.2" stroke="#ee1122" stroke-width="5.8"/><line x1="1074.2" y1="964.2" x2="1064.7" y2="958.1" stroke="#1fe01f" stroke-width="5.8"/><line x1="1064.7" y1="958.1" x2="1074.1" y2="953.0" stroke="#1fe01f" stroke-width="5.8"/><line x1="1074.1" y1="953.0" x2="1127.1" y2="924.1" stroke="#ee1122" stroke-width="5.8"/><line x1="1102.1" y1="937.7" x2="1127.1" y2="924.1" stroke="#1fe01f" stroke-width="5.8"/><line x1="1136.6" y1="804.7" x2="1140.8" y2="790.9" stroke="#1fe01f" stroke-width="5.8"/><line x1="1170.6" y1="838.6" x2="1185.2" y2="831.6" stroke="#1fe01f" stroke-width="5.8"/><line x1="1170.6" y1="838.6" x2="1172.6" y2="844.6" stroke="#1fe01f" stroke-width="5.8"/><line x1="1161.0" y1="880.7" x2="1158.3" y2="875.0" stroke="#1fe01f" stroke-width="5.8"/><line x1="1034.8" y1="883.4" x2="1025.0" y2="873.8" stroke="#1fe01f" stroke-width="5.8"/><line x1="1034.8" y1="883.4" x2="1030.4" y2="884.6" stroke="#1fe01f" stroke-width="5.8"/><line x1="1029.4" y1="926.9" x2="1016.2" y2="934.1" stroke="#1fe01f" stroke-width="5.8"/><line x1="1029.4" y1="926.9" x2="1025.6" y2="923.8" stroke="#1fe01f" stroke-width="5.8"/><line x1="1127.1" y1="924.1" x2="1131.1" y2="914.2" stroke="#1fe01f" stroke-width="5.8"/><line x1="1197.7" y1="917.3" x2="1195.1" y2="928.4" stroke="#1fe01f" stroke-width="5.8"/><line x1="1247.9" y1="898.3" x2="1249.3" y2="888.7" stroke="#1fe01f" stroke-width="5.8"/><line x1="1247.9" y1="898.3" x2="1252.4" y2="889.6" stroke="#1fe01f" stroke-width="5.8"/><line x1="1247.9" y1="898.3" x2="1259.6" y2="911.7" stroke="#1fe01f" stroke-width="5.8"/><line x1="1049.7" y1="997.4" x2="1038.6" y2="1005.3" stroke="#1fe01f" stroke-width="5.8"/><line x1="1049.7" y1="997.4" x2="1060.6" y2="1006.7" stroke="#1fe01f" stroke-width="5.8"/><line x1="1049.7" y1="997.4" x2="1044.4" y2="993.2" stroke="#1fe01f" stroke-width="5.8"/><line x1="1140.8" y1="790.9" x2="1146.0" y2="774.0" stroke="#e6e6e6" stroke-width="5.8"/><line x1="1185.2" y1="831.6" x2="1203.0" y2="823.0" stroke="#e6e6e6" stroke-width="5.8"/><line x1="1172.6" y1="844.6" x2="1175.0" y2="852.0" stroke="#e6e6e6" stroke-width="5.8"/><line x1="1158.3" y1="875.0" x2="1155.0" y2="868.0" stroke="#e6e6e6" stroke-width="5.8"/><line x1="1025.0" y1="873.8" x2="1013.0" y2="862.0" stroke="#e6e6e6" stroke-width="5.8"/><line x1="1030.4" y1="884.6" x2="1025.0" y2="886.0" stroke="#e6e6e6" stroke-width="5.8"/><line x1="1016.2" y1="934.1" x2="1000.0" y2="943.0" stroke="#e6e6e6" stroke-width="5.8"/><line x1="1025.6" y1="923.8" x2="1021.0" y2="920.0" stroke="#e6e6e6" stroke-width="5.8"/><line x1="1131.1" y1="914.2" x2="1136.0" y2="902.0" stroke="#e6e6e6" stroke-width="5.8"/><line x1="1195.1" y1="928.4" x2="1192.0" y2="942.0" stroke="#e6e6e6" stroke-width="5.8"/><line x1="1249.3" y1="888.7" x2="1251.0" y2="877.0" stroke="#e6e6e6" stroke-width="5.8"/><line x1="1252.4" y1="889.6" x2="1258.0" y2="879.0" stroke="#e6e6e6" stroke-width="5.8"/><line x1="1259.6" y1="911.7" x2="1274.0" y2="928.0" stroke="#e6e6e6" stroke-width="5.8"/><line x1="1038.6" y1="1005.3" x2="1025.0" y2="1015.0" stroke="#e6e6e6" stroke-width="5.8"/><line x1="1060.6" y1="1006.7" x2="1074.0" y2="1018.0" stroke="#e6e6e6" stroke-width="5.8"/><line x1="1044.4" y1="993.2" x2="1038.0" y2="988.0" stroke="#e6e6e6" stroke-width="5.8"/><circle cx="1056.5" cy="785.7" r="3.5" fill="#b8a020"/></g></svg>
<span class="t" style="left:882.00px;top:1067.64px;font-size:10.5px;color:#ddd;font-family:'Liberation Serif',serif;-webkit-text-stroke-width:0.22px;">#1 of 2</span>
<div style="left:1378px;top:543px;width:601px;height:562px;background:#ececec;"></div>
<div style="left:1384px;top:558px;width:1px;height:547px;background:#f8f8f8;"></div>
<div style="left:1377px;top:543px;width:602px;height:15px;background:linear-gradient(#e6e6e6,#d0d0d0);border-bottom:1px solid #b8b8b8;"></div>
<div style="left:1383px;top:545px;width:11px;height:11px;background:#fd5f57;border-radius:50%;"></div>
<div style="left:1399px;top:545px;width:11px;height:11px;background:#d2d2d2;border-radius:50%;"></div>
<div style="left:1415px;top:545px;width:11px;height:11px;background:#d2d2d2;border-radius:50%;"></div>
<svg style="left:1630px;top:544px" width="12" height="12" viewBox="0 0 12 12"><circle cx="6" cy="6" r="5.5" fill="#d8101a"/><circle cx="6" cy="6" r="2.2" fill="#fff"/></svg>
<span class="t" style="left:1645.80px;top:545.45px;font-size:10px;color:#555;-webkit-text-stroke-width:0.22px;transform:scaleX(1.0864);">StereoFitter Results</span>
<div style="left:1391px;top:578px;width:588px;height:527px;border:1px solid #b5b5b5;border-right:none;border-bottom:none;"></div>
<div style="left:1606px;top:569px;width:62px;height:19px;background:linear-gradient(#fff,#f7f7f7);border:1px solid #c5c5c5;border-bottom:none;"></div>
<div style="left:1668px;top:570px;width:99px;height:18px;background:#ececec;border:1px solid #cacaca;border-left:none;border-bottom:none;"></div>
<span class="t" style="left:1617.00px;top:572.44px;font-size:12px;color:#000;-webkit-text-stroke-width:0.22px;transform:scaleX(1.0097);">Results</span>
<span class="t" style="left:1681.00px;top:572.44px;font-size:12px;color:#000;-webkit-text-stroke-width:0.22px;transform:scaleX(1.0411);">Original Input</span>
<svg style="left:1425px;top:606px" width="15" height="15" viewBox="0 0 15 15"><rect x="2" y="1" width="11" height="13" rx="1" fill="#eef2f8" stroke="#3d68c0" stroke-width="1.3"/><path d="M5,3 v9 M7.5,3 v9 M10,3 v9" stroke="#8898b8" stroke-width="1"/></svg>
<span class="t" style="left:1418.50px;top:628.00px;font-size:9.5px;color:#111;font-weight:700;-webkit-text-stroke-width:0.0px;transform:scaleX(0.9222);">Report</span>
<svg style="left:1472px;top:605px" width="17" height="16" viewBox="0 0 17 16"><rect x="1" y="1" width="9" height="11" fill="#e8edf6" stroke="#6a88c0" stroke-width="1"/><rect x="5" y="4" width="11" height="11" fill="#f1f4f9" stroke="#6a88c0" stroke-width="1.1"/><path d="M7,7.5 h7 M7,10 h7 M7,12.5 h7" stroke="#8aa6c8" stroke-width="0.9"/></svg>
<span class="t" style="left:1469.00px;top:628.00px;font-size:9.5px;color:#111;font-weight:700;-webkit-text-stroke-width:0.0px;transform:scaleX(0.9237);">Copy</span>
<svg style="left:1936px;top:606px" width="14" height="15" viewBox="0 0 14 15"><rect x="1.5" y="1" width="10" height="12" rx="1" fill="#f2f4f8" stroke="#3d68c0" stroke-width="1.3"/><path d="M5,11 L10,6 L12,9 L13,14 L8,13 Z" fill="#aaa"/></svg>
<span class="t" style="left:1930.80px;top:628.00px;font-size:9.5px;color:#111;font-weight:700;-webkit-text-stroke-width:0.0px;transform:scaleX(0.9403);">Setup</span>
<div style="left:1411px;top:648px;width:553px;height:233px;background:#fff;border:1px solid #cbcbcb;"></div>
<div style="left:1412px;top:649px;width:551px;height:15px;background:#ebebeb;border-bottom:1px solid #d4d4d4;"></div>
<div style="left:1663px;top:649px;width:1px;height:132px;background:#d2d2d2;"></div>
<div style="left:1756px;top:649px;width:1px;height:132px;background:#d2d2d2;"></div>
<div style="left:1848px;top:649px;width:1px;height:132px;background:#d2d2d2;"></div>
<span class="t" style="left:1415.50px;top:651.75px;font-size:10px;color:#000;-webkit-text-stroke-width:0.22px;transform:scaleX(1.1665);">Solution</span>
<span class="t" style="left:1668.00px;top:651.75px;font-size:10px;color:#000;-webkit-text-stroke-width:0.22px;transform:scaleX(0.9731);">χ²</span>
<span class="t" style="left:1761.00px;top:651.75px;font-size:10px;color:#000;-webkit-text-stroke-width:0.22px;transform:scaleX(0.9727);">AIC</span>
<span class="t" style="left:1852.40px;top:651.75px;font-size:10px;color:#000;-webkit-text-stroke-width:0.22px;transform:scaleX(1.0865);">Relative Probability</span>
<div style="left:1412px;top:681px;width:551px;height:1px;background:#d6d6d6;"></div>
<div style="left:1412px;top:698px;width:551px;height:1px;background:#d6d6d6;"></div>
<div style="left:1412px;top:714px;width:551px;height:1px;background:#d6d6d6;"></div>
<div style="left:1412px;top:730px;width:551px;height:1px;background:#d6d6d6;"></div>
<div style="left:1412px;top:747px;width:551px;height:1px;background:#d6d6d6;"></div>
<div style="left:1412px;top:764px;width:551px;height:1px;background:#d6d6d6;"></div>
<div style="left:1412px;top:781px;width:551px;height:1px;background:#d6d6d6;"></div>
<div style="left:1412px;top:681px;width:551px;height:16.5px;background:#0a43d2;"></div>
<svg style="left:1418.5px;top:669px" width="9" height="8" viewBox="0 0 9 8"><path d="M0.3,0.5 L8.7,0.5 L4.5,7.5 Z" fill="#8a8a8a"/></svg>
<span class="t" style="left:1435.00px;top:665.89px;font-size:12.5px;color:#000;-webkit-text-stroke-width:0.22px;">Solution 1 (2 conformers)</span>
<span class="t" style="left:1669.00px;top:665.89px;font-size:12.5px;color:#000;-webkit-text-stroke-width:0.22px;transform:scaleX(0.9860);">130.367</span>
<span class="t" style="left:1761.50px;top:665.89px;font-size:12.5px;color:#000;-webkit-text-stroke-width:0.22px;transform:scaleX(0.9860);">132.367</span>
<span class="t" style="left:1853.50px;top:665.89px;font-size:12.5px;color:#000;-webkit-text-stroke-width:0.22px;transform:scaleX(0.9895);">1.000</span>
<span class="t" style="left:1454.00px;top:682.89px;font-size:12.5px;color:#0a2a80;-webkit-text-stroke-width:0.22px;transform:scaleX(0.9804);">Conformer 1: 64.6796%</span>
<span class="t" style="left:1454.00px;top:699.49px;font-size:12.5px;color:#000;-webkit-text-stroke-width:0.22px;transform:scaleX(0.9935);">Conformer 2:</span>
<svg style="left:1418.5px;top:719px" width="9" height="8" viewBox="0 0 9 8"><path d="M0.3,0.5 L8.7,0.5 L4.5,7.5 Z" fill="#8a8a8a"/></svg>
<span class="t" style="left:1435.00px;top:715.89px;font-size:12.5px;color:#000;-webkit-text-stroke-width:0.22px;">Solution 2 (1 conformers)</span>
<span class="t" style="left:1669.00px;top:715.89px;font-size:12.5px;color:#000;-webkit-text-stroke-width:0.22px;transform:scaleX(0.9860);">233.088</span>
<span class="t" style="left:1761.50px;top:715.89px;font-size:12.5px;color:#000;-webkit-text-stroke-width:0.22px;transform:scaleX(0.9860);">233.088</span>
<span class="t" style="left:1853.50px;top:715.89px;font-size:12.5px;color:#000;-webkit-text-stroke-width:0.22px;transform:scaleX(0.9895);">0.000</span>
<span class="t" style="left:1454.00px;top:732.29px;font-size:12.5px;color:#000;-webkit-text-stroke-width:0.22px;transform:scaleX(0.9605);">Conformer 1: 100%</span>
<svg style="left:1418.5px;top:752px" width="9" height="8" viewBox="0 0 9 8"><path d="M0.3,0.5 L8.7,0.5 L4.5,7.5 Z" fill="#8a8a8a"/></svg>
<span class="t" style="left:1435.00px;top:748.89px;font-size:12.5px;color:#000;-webkit-text-stroke-width:0.22px;">Solution 3 (1 conformers)</span>
<span class="t" style="left:1669.00px;top:748.89px;font-size:12.5px;color:#000;-webkit-text-stroke-width:0.22px;transform:scaleX(0.9860);">463.140</span>
<span class="t" style="left:1761.50px;top:748.89px;font-size:12.5px;color:#000;-webkit-text-stroke-width:0.22px;transform:scaleX(0.9860);">463.140</span>
<span class="t" style="left:1853.50px;top:748.89px;font-size:12.5px;color:#000;-webkit-text-stroke-width:0.22px;transform:scaleX(0.9895);">0.000</span>
<span class="t" style="left:1454.00px;top:765.59px;font-size:12.5px;color:#000;-webkit-text-stroke-width:0.22px;transform:scaleX(0.9935);">Conformer 2:</span>
<span class="t" style="left:1601.50px;top:699.49px;font-size:12.5px;color:#000;-webkit-text-stroke-width:0.22px;transform:scaleX(1.0323);">35.3204%</span>
<span class="t" style="left:1601.50px;top:765.59px;font-size:12.5px;color:#000;-webkit-text-stroke-width:0.22px;transform:scaleX(0.9417);">100%</span>
<div style="left:1412px;top:881px;width:551px;height:7px;background:#ececec;"></div>
<svg style="left:1684px;top:880px" width="6" height="6" viewBox="0 0 6 6"><circle cx="3" cy="3" r="2" fill="#bbb"/></svg>
<div style="left:1411px;top:887px;width:537px;height:218px;background:#fff;border:1px solid #cbcbcb;border-bottom:none;"></div>
<div style="left:1412px;top:888px;width:535px;height:15.5px;background:#ebebeb;border-bottom:1px solid #d4d4d4;"></div>
<div style="left:1584.8px;top:888px;width:1px;height:217px;background:#d2d2d2;"></div>
<div style="left:1677px;top:888px;width:1px;height:217px;background:#d2d2d2;"></div>
<span class="t" style="left:1416.00px;top:891.45px;font-size:10px;color:#111;-webkit-text-stroke-width:0.22px;transform:scaleX(1.0586);">Atoms</span>
<span class="t" style="left:1589.00px;top:891.45px;font-size:10px;color:#111;-webkit-text-stroke-width:0.22px;transform:scaleX(1.0836);">Experimental</span>
<span class="t" style="left:1681.00px;top:891.45px;font-size:10px;color:#111;-webkit-text-stroke-width:0.22px;transform:scaleX(1.0853);">Calculated Average</span>
<div style="left:1412px;top:920px;width:535px;height:1px;background:#d9d9d9;"></div>
<div style="left:1412px;top:937px;width:535px;height:1px;background:#d9d9d9;"></div>
<div style="left:1412px;top:954px;width:535px;height:1px;background:#d9d9d9;"></div>
<div style="left:1412px;top:970px;width:535px;height:1px;background:#d9d9d9;"></div>
<div style="left:1412px;top:987px;width:535px;height:1px;background:#d9d9d9;"></div>
<div style="left:1412px;top:1004px;width:535px;height:1px;background:#d9d9d9;"></div>
<div style="left:1412px;top:1020px;width:535px;height:1px;background:#d9d9d9;"></div>
<div style="left:1412px;top:1037px;width:535px;height:1px;background:#d9d9d9;"></div>
<div style="left:1412px;top:1054px;width:535px;height:1px;background:#d9d9d9;"></div>
<div style="left:1412px;top:1070px;width:535px;height:1px;background:#d9d9d9;"></div>
<div style="left:1412px;top:1087px;width:535px;height:1px;background:#d9d9d9;"></div>
<div style="left:1412px;top:1104px;width:535px;height:1px;background:#d9d9d9;"></div>
<div style="left:1412px;top:1055px;width:535px;height:16px;background:#f9d4d4;"></div>
<svg style="left:1418.5px;top:908.5px" width="9" height="8" viewBox="0 0 9 8"><path d="M0.3,0.5 L8.7,0.5 L4.5,7.5 Z" fill="#8a8a8a"/></svg>
<span class="t" style="left:1434.00px;top:905.19px;font-size:12.5px;color:#111;-webkit-text-stroke-width:0.22px;">RDC couplings (Hz)</span>
<span class="t" style="left:1454.00px;top:921.87px;font-size:12.5px;color:#111;-webkit-text-stroke-width:0.22px;">1,21</span>
<span class="t" style="left:1590.00px;top:921.87px;font-size:12.5px;color:#111;-webkit-text-stroke-width:0.22px;">-11.668</span>
<span class="t" style="left:1682.00px;top:921.87px;font-size:12.5px;color:#111;-webkit-text-stroke-width:0.22px;">-10.157</span>
<span class="t" style="left:1454.00px;top:938.55px;font-size:12.5px;color:#111;-webkit-text-stroke-width:0.22px;">4,22</span>
<span class="t" style="left:1590.00px;top:938.55px;font-size:12.5px;color:#111;-webkit-text-stroke-width:0.22px;">-9.957</span>
<span class="t" style="left:1682.00px;top:938.55px;font-size:12.5px;color:#111;-webkit-text-stroke-width:0.22px;">-9.359</span>
<span class="t" style="left:1454.00px;top:955.23px;font-size:12.5px;color:#111;-webkit-text-stroke-width:0.22px;">5,23</span>
<span class="t" style="left:1590.00px;top:955.23px;font-size:12.5px;color:#111;-webkit-text-stroke-width:0.22px;">-19.992</span>
<span class="t" style="left:1682.00px;top:955.23px;font-size:12.5px;color:#111;-webkit-text-stroke-width:0.22px;">-19.818</span>
<span class="t" style="left:1454.00px;top:971.91px;font-size:12.5px;color:#111;-webkit-text-stroke-width:0.22px;">7,24</span>
<span class="t" style="left:1590.00px;top:971.91px;font-size:12.5px;color:#111;-webkit-text-stroke-width:0.22px;">-2.700</span>
<span class="t" style="left:1682.00px;top:971.91px;font-size:12.5px;color:#111;-webkit-text-stroke-width:0.22px;">-0.432</span>
<span class="t" style="left:1454.00px;top:988.59px;font-size:12.5px;color:#111;-webkit-text-stroke-width:0.22px;">(8,26) (8,27)</span>
<span class="t" style="left:1590.00px;top:988.59px;font-size:12.5px;color:#111;-webkit-text-stroke-width:0.22px;">-7.518</span>
<span class="t" style="left:1682.00px;top:988.59px;font-size:12.5px;color:#111;-webkit-text-stroke-width:0.22px;">-5.638</span>
<span class="t" style="left:1454.00px;top:1005.27px;font-size:12.5px;color:#111;-webkit-text-stroke-width:0.22px;">10,29</span>
<span class="t" style="left:1590.00px;top:1005.27px;font-size:12.5px;color:#111;-webkit-text-stroke-width:0.22px;">-22.263</span>
<span class="t" style="left:1682.00px;top:1005.27px;font-size:12.5px;color:#111;-webkit-text-stroke-width:0.22px;">-20.537</span>
<span class="t" style="left:1454.00px;top:1021.95px;font-size:12.5px;color:#111;-webkit-text-stroke-width:0.22px;">11,30</span>
<span class="t" style="left:1590.00px;top:1021.95px;font-size:12.5px;color:#111;-webkit-text-stroke-width:0.22px;">-8.007</span>
<span class="t" style="left:1682.00px;top:1021.95px;font-size:12.5px;color:#111;-webkit-text-stroke-width:0.22px;">-10.879</span>
<span class="t" style="left:1454.00px;top:1038.63px;font-size:12.5px;color:#111;-webkit-text-stroke-width:0.22px;">(12,32) (12,33)</span>
<span class="t" style="left:1590.00px;top:1038.63px;font-size:12.5px;color:#111;-webkit-text-stroke-width:0.22px;">-7.049</span>
<span class="t" style="left:1682.00px;top:1038.63px;font-size:12.5px;color:#111;-webkit-text-stroke-width:0.22px;">-10.843</span>
<span class="t" style="left:1454.00px;top:1055.31px;font-size:12.5px;color:#5a1010;-webkit-text-stroke-width:0.22px;">(18,40) (18,41) (18,42)</span>
<span class="t" style="left:1590.00px;top:1055.31px;font-size:12.5px;color:#5a1010;-webkit-text-stroke-width:0.22px;">-2.375</span>
<span class="t" style="left:1682.00px;top:1055.31px;font-size:12.5px;color:#5a1010;-webkit-text-stroke-width:0.22px;">-0.541</span>
<svg style="left:1418.5px;top:1075.3px" width="9" height="8" viewBox="0 0 9 8"><path d="M0.3,0.5 L8.7,0.5 L4.5,7.5 Z" fill="#8a8a8a"/></svg>
<span class="t" style="left:1435.00px;top:1071.99px;font-size:12.5px;color:#111;-webkit-text-stroke-width:0.22px;transform:scaleX(1.0149);">Chemical shifts (ppm)</span>
<span class="t" style="left:1454.00px;top:1088.67px;font-size:12.5px;color:#111;-webkit-text-stroke-width:0.22px;">1</span>
<span class="t" style="left:1590.00px;top:1088.67px;font-size:12.5px;color:#111;-webkit-text-stroke-width:0.22px;">93.686</span>
<span class="t" style="left:1682.00px;top:1088.67px;font-size:12.5px;color:#111;-webkit-text-stroke-width:0.22px;">100.910</span>
<div style="left:1949px;top:887px;width:16px;height:218px;background:#fafafa;border-left:1px solid #dedede;border-right:1px solid #dedede;"></div>
<svg style="left:1951px;top:889px" width="12" height="9" viewBox="0 0 12 9"><path d="M1,8 L11,8 L6,2 Z" fill="#777"/></svg>
<div style="left:1951px;top:959px;width:12px;height:146px;background:#c8c8c8;"></div>
<div style="left:1965px;top:887px;width:14px;height:218px;background:#ececec;"></div>
<div style="left:347px;top:526px;width:484px;height:423px;background:#fff;"></div>
<div style="left:346px;top:526px;width:486px;height:2px;background:#000;"></div>
<div style="left:346px;top:949px;width:486px;height:1.3px;background:#111;"></div>
<div style="left:830px;top:528px;width:1.5px;height:421px;background:#fff;"></div>
<div style="left:831px;top:528px;width:1px;height:421px;background:#9a9a9a;"></div>
<div style="left:347px;top:528px;width:484px;height:13px;background:linear-gradient(#e4e4e4,#cfcfcf);border-bottom:1px solid #b4b4b4;"></div>
<div style="left:352px;top:530px;width:8px;height:8px;background:#fc5f57;border-radius:50%;"></div>
<div style="left:367px;top:530px;width:8px;height:8px;background:#fdbc2e;border-radius:50%;"></div>
<div style="left:382px;top:530px;width:8px;height:8px;background:#28c840;border-radius:50%;"></div>
<svg style="left:542px;top:529px" width="10" height="10" viewBox="0 0 10 10"><circle cx="5" cy="5" r="4.5" fill="#d8101a"/><circle cx="5" cy="5" r="1.8" fill="#fff"/></svg>
<span class="t" style="left:555.00px;top:529.31px;font-size:8.5px;color:#555;-webkit-text-stroke-width:0.22px;transform:scaleX(1.1246);">Results Histogram</span>
<div style="left:551px;top:613px;width:6px;height:6px;background:#0aa0e6;"></div>
<span class="t" style="left:561.80px;top:610.95px;font-size:10px;color:#444;-webkit-text-stroke-width:0.22px;transform:scaleX(0.9727);">AIC</span>
<div style="left:586px;top:613px;width:6px;height:6px;background:#8cc83c;"></div>
<span class="t" style="left:597.00px;top:610.95px;font-size:10px;color:#444;-webkit-text-stroke-width:0.22px;transform:scaleX(0.9372);">X²</span>
<div style="left:424px;top:643px;width:364px;height:1px;background:#ececec;"></div>
<span class="t" style="left:392.50px;top:637.55px;font-size:10px;color:#444;-webkit-text-stroke-width:0.22px;transform:scaleX(1.0604);">525.8</span>
<div style="left:424px;top:683px;width:364px;height:1px;background:#ececec;"></div>
<span class="t" style="left:392.50px;top:677.75px;font-size:10px;color:#444;-webkit-text-stroke-width:0.22px;transform:scaleX(1.0604);">394.3</span>
<div style="left:424px;top:724px;width:364px;height:1px;background:#ececec;"></div>
<span class="t" style="left:392.50px;top:718.25px;font-size:10px;color:#444;-webkit-text-stroke-width:0.22px;transform:scaleX(1.0604);">262.9</span>
<div style="left:424px;top:764px;width:364px;height:1px;background:#ececec;"></div>
<span class="t" style="left:392.50px;top:758.75px;font-size:10px;color:#444;-webkit-text-stroke-width:0.22px;transform:scaleX(1.0604);">131.4</span>
<div style="left:424px;top:805px;width:364px;height:1px;background:#ececec;"></div>
<span class="t" style="left:404.50px;top:799.75px;font-size:10px;color:#444;-webkit-text-stroke-width:0.22px;transform:scaleX(1.0460);">0.0</span>
<div style="left:424px;top:642px;width:1px;height:164px;background:#efefef;"></div>
<div style="left:516px;top:642px;width:1px;height:164px;background:#efefef;"></div>
<div style="left:608px;top:642px;width:1px;height:164px;background:#efefef;"></div>
<div style="left:699px;top:642px;width:1px;height:164px;background:#efefef;"></div>
<div style="left:788px;top:642px;width:1px;height:164px;background:#efefef;"></div>
<div style="left:448px;top:643px;width:22px;height:162px;background:#0aa0e6;"></div>
<div style="left:470.5px;top:643px;width:22.5px;height:162px;background:#8dc73e;"></div>
<div style="left:538px;top:690px;width:22px;height:115px;background:#0aa0e6;"></div>
<div style="left:560.5px;top:690px;width:22.5px;height:115px;background:#8dc73e;"></div>
<div style="left:630px;top:764px;width:22px;height:41px;background:#0aa0e6;"></div>
<div style="left:652.5px;top:765px;width:22.5px;height:40px;background:#8dc73e;"></div>
<div style="left:721px;top:728px;width:22px;height:77px;background:#0aa0e6;"></div>
<div style="left:743.5px;top:730px;width:22.5px;height:75px;background:#8dc73e;"></div>
<div style="left:423.8px;top:851px;width:96px;height:12px;transform:rotate(-90deg);transform-origin:48px 6px;"><span class="t" style="left:0;top:-1px;font-family:'Liberation Sans',sans-serif;font-size:10px;color:#555;">artemisin_RRSRRSR</span></div>
<div style="left:514px;top:851px;width:96px;height:12px;transform:rotate(-90deg);transform-origin:48px 6px;"><span class="t" style="left:0;top:-1px;font-family:'Liberation Sans',sans-serif;font-size:10px;color:#555;">artemisin_RSRRSRR</span></div>
<div style="left:604.2px;top:851px;width:96px;height:12px;transform:rotate(-90deg);transform-origin:48px 6px;"><span class="t" style="left:0;top:-1px;font-family:'Liberation Sans',sans-serif;font-size:10px;color:#555;">artemisin_RSRSRSS</span></div>
<div style="left:695.3px;top:851px;width:96px;height:12px;transform:rotate(-90deg);transform-origin:48px 6px;"><span class="t" style="left:0;top:-1px;font-family:'Liberation Sans',sans-serif;font-size:10px;color:#555;">artemisin_RSRSSSS</span></div>
</body></html>
